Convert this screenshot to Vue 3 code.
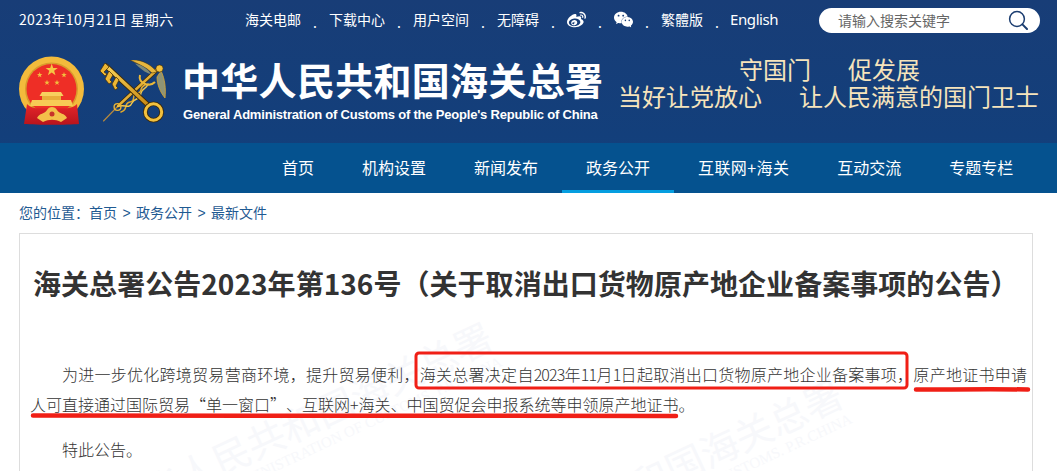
<script setup>
const links = ['海关电邮', '下载中心', '用户空间', '无障碍']
const navItems = ['首页', '机构设置', '新闻发布', '政务公开', '互联网+海关', '互动交流', '专题专栏']
const star = (cx, cy, r) => {
  const pts = []
  for (let i = 0; i < 10; i++) {
    const a = -Math.PI / 2 + (i * Math.PI) / 5
    const d = i % 2 ? r * 0.4 : r
    pts.push(`${(cx + d * Math.cos(a)).toFixed(2)},${(cy + d * Math.sin(a)).toFixed(2)}`)
  }
  return pts.join(' ')
}
const smallStars = [[20.7, 19], [45, 19], [28, 26.7], [38, 26.7]]
const marks = [
  { id: 1, cls: 'wm-one' },
  { id: 2, cls: 'wm-two' }
]
</script>

<template>
  <div class="page">
    <header class="masthead">
      <div class="topbar">
        <span class="date">2023年10月21日 星期六</span>
        <nav class="toplinks">
          <template v-for="l in links" :key="l">
            <a>{{ l }}</a>
            <i class="dot">.</i>
          </template>
          <svg class="weibo" viewBox="0 0 24 24" width="19" height="19">
            <path fill="#fff" d="M10.098 20.323c-3.977.391-7.414-1.406-7.672-4.02-.259-2.609 2.759-5.047 6.74-5.441 3.979-.394 7.413 1.404 7.671 4.018.259 2.6-2.759 5.049-6.737 5.439l-.002.004zM9.05 17.219c-.384.616-1.208.884-1.829.602-.612-.279-.793-.991-.406-1.593.379-.595 1.176-.861 1.793-.601.622.263.82.972.442 1.592zm1.27-1.627c-.141.237-.449.353-.689.253-.236-.09-.313-.361-.177-.586.138-.227.436-.346.672-.24.239.09.315.36.18.601l.014-.028zm.176-2.719c-1.893-.493-4.033.45-4.857 2.118-.836 1.704-.026 3.591 1.886 4.21 1.983.64 4.318-.341 5.132-2.179.8-1.793-.201-3.642-2.161-4.149zm7.563-1.224c-.346-.105-.579-.18-.405-.615.381-.977.42-1.804 0-2.404-.781-1.112-2.915-1.053-5.364-.03 0 0-.766.331-.571-.271.376-1.217.315-2.224-.27-2.809-1.338-1.337-4.869.045-7.888 3.08C1.309 10.87 0 13.273 0 15.348c0 3.981 5.099 6.395 10.086 6.395 6.536 0 10.888-3.801 10.888-6.82 0-1.822-1.547-2.854-2.915-3.284v.01zm1.908-5.092c-.766-.856-1.908-1.187-2.96-.962-.436.09-.706.511-.616.932.09.42.511.691.932.602.511-.105 1.067.044 1.442.465.376.421.466.977.316 1.473-.136.406.089.856.51.992.405.119.857-.105.992-.512.33-1.021.12-2.178-.646-3.035l.03.045zm2.418-2.195c-1.576-1.757-3.905-2.419-6.054-1.968-.496.104-.812.587-.706 1.081.104.496.586.813 1.082.707 1.532-.331 3.185.15 4.296 1.383 1.112 1.246 1.429 2.943.947 4.416-.165.48.106 1.007.586 1.157.479.165.991-.104 1.157-.586.675-2.088.241-4.478-1.338-6.235l.03.045z" />
          </svg>
          <i class="dot">.</i>
          <svg class="wechat" viewBox="0 0 24 24" width="19" height="19">
            <path fill="#fff" d="M8.691 2.188C3.891 2.188 0 5.476 0 9.53c0 2.212 1.17 4.203 3.002 5.55a.59.59 0 0 1 .213.665l-.39 1.48c-.019.07-.048.141-.048.213 0 .163.13.295.29.295a.326.326 0 0 0 .167-.054l1.903-1.114a.864.864 0 0 1 .717-.098 10.16 10.16 0 0 0 2.837.403c.276 0 .543-.027.811-.05-.857-2.578.157-4.972 1.932-6.446 1.703-1.415 3.882-1.98 5.853-1.838-.576-3.583-4.196-6.348-8.596-6.348zM5.785 5.991c.642 0 1.162.529 1.162 1.18a1.17 1.17 0 0 1-1.162 1.178A1.17 1.17 0 0 1 4.623 7.17c0-.651.52-1.18 1.162-1.18zm5.813 0c.642 0 1.162.529 1.162 1.18a1.17 1.17 0 0 1-1.162 1.178 1.17 1.17 0 0 1-1.162-1.178c0-.651.52-1.18 1.162-1.18zm5.34 2.867c-1.797-.052-3.746.512-5.28 1.786-1.72 1.428-2.687 3.72-1.78 6.22.942 2.453 3.666 4.229 6.884 4.229.826 0 1.622-.12 2.361-.336a.722.722 0 0 1 .598.082l1.584.926a.272.272 0 0 0 .14.047c.134 0 .24-.111.24-.247 0-.06-.023-.12-.038-.177l-.327-1.233a.582.582 0 0 1-.023-.156.49.49 0 0 1 .201-.398C23.024 18.48 24 16.82 24 14.98c0-3.21-2.931-5.837-6.656-6.088V8.89c-.135-.01-.27-.027-.407-.03zm-2.53 3.274c.535 0 .969.44.969.982a.976.976 0 0 1-.969.983.976.976 0 0 1-.969-.983c0-.542.434-.982.97-.982zm4.844 0c.535 0 .969.44.969.982a.976.976 0 0 1-.969.983.976.976 0 0 1-.969-.983c0-.542.434-.982.969-.982z" />
          </svg>
          <i class="dot">.</i>
          <a>繁體版</a>
          <i class="dot">.</i>
          <a class="english">English</a>
        </nav>
        <div class="search">
          <span class="placeholder">请输入搜索关键字</span>
          <svg class="lens" viewBox="0 0 20 20" width="20" height="20">
            <circle cx="9" cy="9" r="7.4" fill="none" stroke="#1b3d70" stroke-width="1.5" />
            <path d="M14.4 14.4 L19 19" stroke="#1b3d70" stroke-width="2" stroke-linecap="round" />
          </svg>
        </div>
      </div>

      <div class="brand">
        <svg class="emblem" viewBox="0 0 66 70" width="66" height="70">
          <defs>
            <linearGradient id="ribbon" x1="0" y1="0" x2="0" y2="1">
              <stop offset="0" stop-color="#e6262a" />
              <stop offset="1" stop-color="#b8141c" />
            </linearGradient>
          </defs>
          <circle cx="32.5" cy="33" r="32.5" fill="#f3bb3c" />
          <circle cx="32.5" cy="33" r="26.5" fill="#d99b2c" />
          <circle cx="32.5" cy="33" r="25" fill="#ee2e26" />
          <polygon :points="star(32.7, 14, 6.4)" fill="#f6c644" />
          <polygon v-for="(s, i) in smallStars" :key="i" :points="star(s[0], s[1], 2.9)" fill="#f2bd3e" />
          <path d="M23 36 L42 36 L44.5 40 L20.5 40 Z" fill="#f8cf5e" />
          <rect x="23" y="40" width="19" height="4" fill="#e9ae3a" />
          <path d="M13 44 H52 L54 50 H11 Z" fill="#f7ca55" />
          <path d="M8 48 C14 54 22 52 32 52 C42 52 52 54 58 48 L60 68 C48 69 18 69 5 68 Z" fill="url(#ribbon)" />
          <path d="M18 62 C20 57 26 58 28 54 C30 50 36 50 38 54 C40 58 46 57 48 62 L42 66 C36 63 30 63 24 66 Z" fill="#f3c04a" />
          <circle cx="33" cy="58" r="2.5" fill="#c8312a" />
        </svg>

        <svg class="keys" viewBox="0 0 68 66" width="68" height="66">
          <defs>
            <linearGradient id="gold" x1="0" y1="0" x2="1" y2="1">
              <stop offset="0" stop-color="#f9d35a" />
              <stop offset="1" stop-color="#c98a14" />
            </linearGradient>
          </defs>
          <g fill="none" stroke-linecap="round">
            <path d="M4.5 61 L20 45" stroke="#b98a3c" stroke-width="1.1" />
            <path d="M19 46 L61 7" stroke="#3d2a08" stroke-width="4" />
            <path d="M19 46 L61 7" stroke="url(#gold)" stroke-width="2.4" />
            <path d="M22 52 C30 50 24 43 31 42 C38 41 31 34 39 33 C44 32 40 27 46 25" stroke="#e2a92b" stroke-width="1.5" />
            <path d="M18 47 C25 43 30 50 33 43 C36 37 41 41 42 33 C43 28 47 30 49 24" stroke="#f3c64a" stroke-width="1.4" />
            <circle cx="18.5" cy="47" r="3.4" stroke="#e9b437" stroke-width="1.4" />
            <path d="M7 6 L49 45" stroke="#3d2a08" stroke-width="5.2" />
            <path d="M7 6 L49 45" stroke="url(#gold)" stroke-width="3.6" />
            <circle cx="54.5" cy="52" r="8.2" stroke="#3d2a08" stroke-width="4.6" />
            <circle cx="54.5" cy="52" r="8.2" stroke="#f2c13f" stroke-width="3" />
          </g>
          <path d="M6 3 L10 7 L5 12 L8 14 L6 16 L1 11 Z M10 11 L14 15 L11 20 L13 22 L10 24 L6 19 Z M17 17 L20 20 L17 26 L19 28 L16 30 L13 24 Z" fill="#eeb735" stroke="#3d2a08" stroke-width=".7" />
          <path d="M31 0 C39 -1 50 2 58 12 L53 13 C47 7 39 4 31 0 Z" fill="#e7b63e" stroke="#3d2a08" stroke-width=".5" />
          <path d="M36 3.5 C43 5 49 9 52 14 C46 13 41 8 36 3.5 Z" fill="#7f8a78" />
          <path d="M62 11 C66 19 67 29 66 38 C61 32 58 24 58 17 Z" fill="#8f9475" stroke="#d9a631" stroke-width=".8" />
          <path d="M41 15 C39 23 50 28 56 22" fill="none" stroke="#eab838" stroke-width="2" />
          <circle cx="60.5" cy="8.5" r="3.6" fill="#f2c13f" stroke="#3d2a08" stroke-width=".6" />
        </svg>

        <div class="brandname">
          <div class="cn">中华人民共和国海关总署</div>
          <div class="en">General Administration of Customs of the People's Republic of China</div>
        </div>

        <div class="slogan">
          <div class="s1"><span>守国门</span><span>促发展</span></div>
          <div class="s2"><span>当好让党放心</span><span>让人民满意的国门卫士</span></div>
        </div>
      </div>

      <nav class="mainnav">
        <a v-for="n in navItems" :key="n" :class="{ active: n === '政务公开', wide: n === '互联网+海关' }">{{ n }}</a>
      </nav>
    </header>

    <div class="crumbs">您的位置：首页<em>&gt;</em>政务公开<em>&gt;</em>最新文件</div>

    <article class="article">
      <h1 class="title">海关总署公告2023年第136号（关于取消出口货物原产地企业备案事项的公告）</h1>
      <p class="para">为进一步优化跨境贸易营商环境，提升贸易便利，海关总署决定自<span class="num">2023</span>年<span class="num">11</span>月<span class="num">1</span>日起取消出口货物原产地企业备案事项，原产地证书申请人可直接通过国际贸易“单一窗口”、互联网+海关、中国贸促会申报系统等申领原产地证书。</p>
      <p class="para last">特此公告。</p>

      <div v-for="m in marks" :key="m.id" class="watermark" :class="m.cls">
        <div class="wm-cn">中华人民共和国海关总署</div>
        <div class="wm-en">GENERAL ADMINISTRATION OF CUSTOMS. P.R.CHINA</div>
      </div>
    </article>

    <svg class="annotations" viewBox="0 0 1057 471" width="1057" height="471">
      <rect x="416" y="353" width="491" height="35" rx="3" fill="none" stroke="#f01f16" stroke-width="3" />
      <path d="M916 389.5 C950 389.5 995 389 1028 389.5" fill="none" stroke="#f01f16" stroke-width="4.5" stroke-linecap="round" />
      <path d="M33 415.5 C200 417.5 500 414 676 416" fill="none" stroke="#f01f16" stroke-width="4.5" stroke-linecap="round" />
    </svg>
  </div>
</template>

<style scoped>
.page {
  position: relative;
  width: 1057px;
  height: 471px;
  overflow: hidden;
  background: #fff;
  font-family: "Noto Sans CJK SC", "Noto Sans", sans-serif;
  color: #333;
}
.masthead {
  background: linear-gradient(#183d77, #133f7b 70%, #13437f);
  color: #fff;
}
.topbar {
  display: flex;
  align-items: center;
  height: 38px;
  padding-left: 19px;
}
.date {
  width: 226px;
  font-size: 14px;
  line-height: 38px;
  letter-spacing: 0.35px;
  white-space: nowrap;
}
.toplinks {
  display: flex;
  align-items: center;
  width: 574px;
  font-size: 14px;
}
.toplinks a {
  white-space: nowrap;
}
.dot {
  width: 28px;
  text-align: center;
  font-style: normal;
  font-size: 14px;
  position: relative;
  top: 3px;
}
.english {
  font-family: "Noto Sans", sans-serif;
  font-size: 15px;
  letter-spacing: -0.4px;
  margin-left: -1px;
}
.search {
  display: flex;
  align-items: center;
  justify-content: space-between;
  width: 221px;
  height: 25px;
  margin-top: 2px;
  padding: 0 12px 0 19px;
  box-sizing: border-box;
  border-radius: 13px;
  background: #fff;
}
.placeholder {
  font-size: 14px;
  color: #666;
  white-space: nowrap;
}
.brand {
  display: flex;
  align-items: flex-start;
  height: 105px;
  padding: 18px 0 0 19px;
  box-sizing: border-box;
}
.emblem {
  flex: none;
}
.keys {
  flex: none;
  margin: 4px 0 0 14px;
}
.brandname {
  margin: 1px 0 0 15px;
  width: 436px;
  flex: none;
}
.cn {
  font-size: 38px;
  line-height: 44px;
  font-weight: 700;
  letter-spacing: 0.3px;
  white-space: nowrap;
  color: #fff;
}
.en {
  font-family: "Liberation Sans", sans-serif;
  font-size: 13px;
  font-weight: 700;
  line-height: 16px;
  margin: 6px 0 0 1px;
  letter-spacing: -0.2px;
  white-space: nowrap;
}
.slogan {
  color: #f6e4bc;
  font-size: 24px;
  line-height: 27px;
  margin: -1px 0 0;
  white-space: nowrap;
}
.s1 {
  display: flex;
  gap: 37px;
  padding-left: 121px;
}
.s2 {
  display: flex;
  gap: 37px;
}
.s2 span:first-child {
  width: 144px;
}
.mainnav {
  display: flex;
  height: 50px;
  padding-left: 258px;
  background: #05528f;
  font-size: 16px;
}
.mainnav a {
  padding: 0 24px;
  line-height: 48px;
  white-space: nowrap;
  box-sizing: border-box;
}
.mainnav a.wide {
  letter-spacing: 0.4px;
}
.mainnav a.active {
  border-bottom: 3px solid #059ee0;
}
.crumbs {
  height: 40px;
  padding-left: 19px;
  font-size: 14px;
  line-height: 38px;
  color: #1f5a92;
  white-space: nowrap;
}
.crumbs em {
  font-style: normal;
  display: inline-block;
  width: 19px;
  text-align: center;
  font-family: "Liberation Sans", sans-serif;
}
.article {
  position: relative;
  margin: 0 24px 0 19px;
  padding: 0 5px 0 10px;
  height: 400px;
  border: 1px solid #ddd;
  overflow: hidden;
}
.title {
  position: relative;
  z-index: 1;
  margin: 0;
  padding: 29px 0 0 3px;
  font-size: 28px;
  line-height: 40px;
  font-weight: 700;
  letter-spacing: 0.05px;
  color: #333;
  white-space: nowrap;
}
.para {
  position: relative;
  z-index: 1;
  margin: 56px 0 0;
  width: 997px;
  font-size: 16px;
  font-weight: 300;
  line-height: 30px;
  text-indent: 2em;
  text-align: justify;
  text-spacing-trim: space-all;
  color: #333;
}
.para.last {
  margin-top: 15px;
}
.num {
  letter-spacing: -0.9px;
}
.watermark {
  position: absolute;
  color: #f7f8fb;
  transform: rotate(-25deg);
  transform-origin: left top;
  white-space: nowrap;
}
.wm-one {
  left: 81px;
  top: 256px;
}
.wm-two {
  left: 431px;
  top: 313px;
}
.wm-cn {
  font-size: 38px;
  line-height: 44px;
}
.wm-en {
  font-family: "Liberation Serif", serif;
  font-size: 15px;
  padding-left: 40px;
}
.annotations {
  position: absolute;
  inset: 0;
  pointer-events: none;
}
</style>

<style>
html, body {
  margin: 0;
  background: #fff;
  overflow: hidden;
}
</style>
